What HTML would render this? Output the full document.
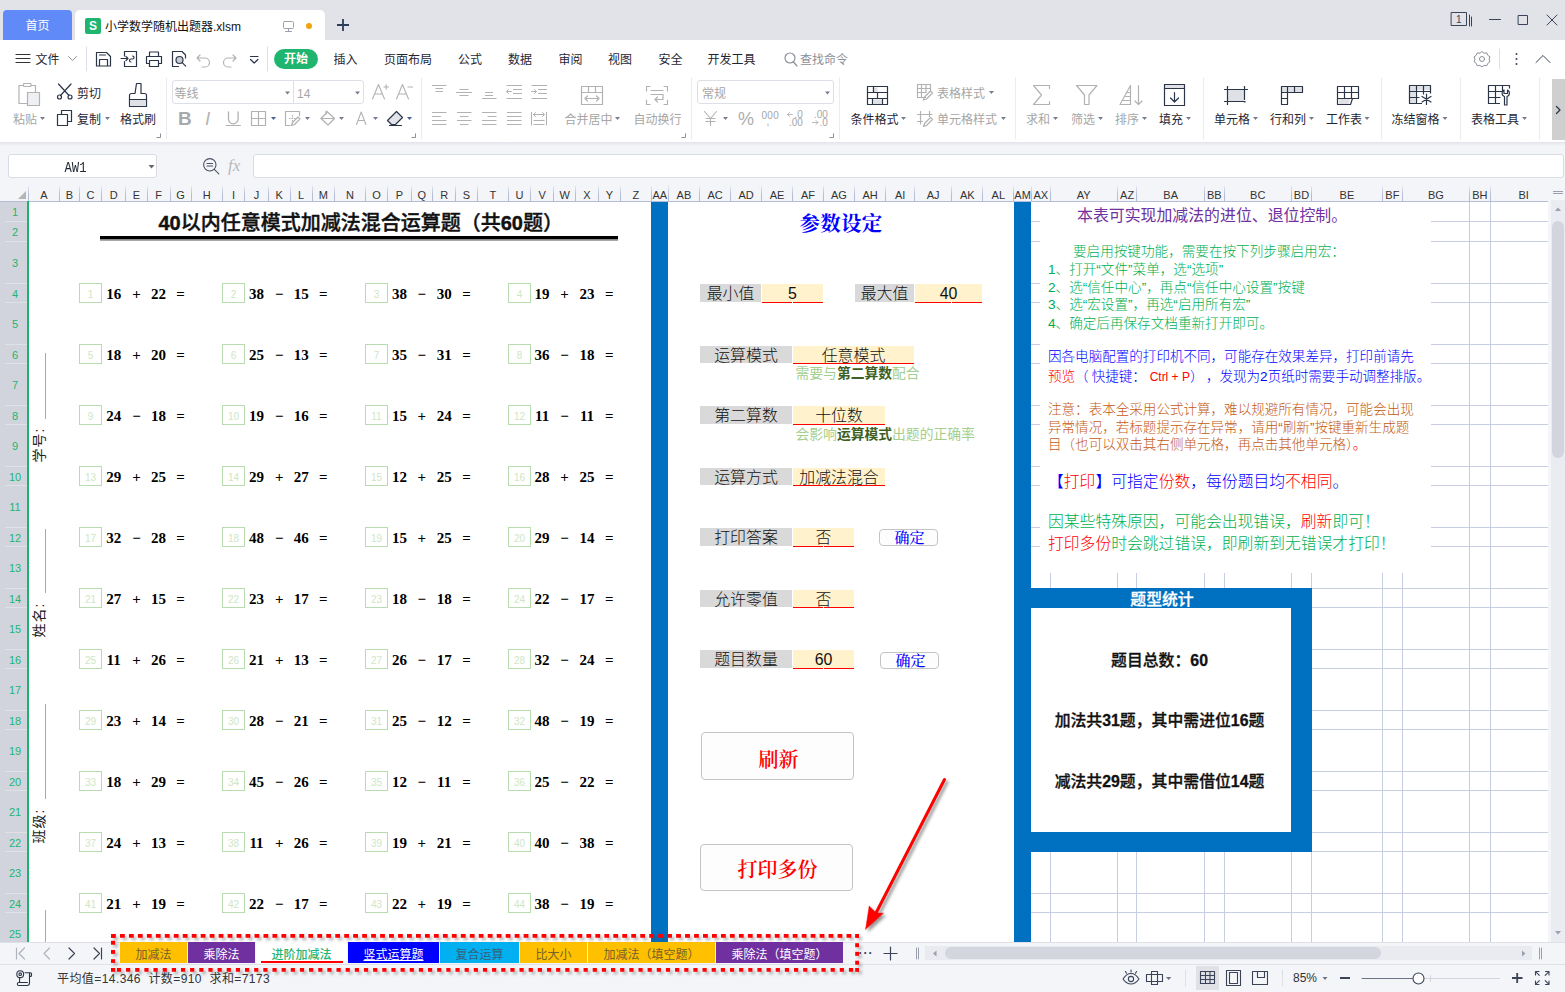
<!DOCTYPE html><html lang="zh"><head><meta charset="utf-8"><title>小学数学随机出题器.xlsm</title><style>
*{box-sizing:border-box}
html,body{margin:0;padding:0}
body{width:1565px;height:992px;position:relative;overflow:hidden;background:#fff;
font-family:"Liberation Sans","Noto Sans CJK SC",sans-serif;font-size:12px;color:#222}
.a{position:absolute}
.t{position:absolute;white-space:nowrap;line-height:1}
.c{position:absolute;white-space:nowrap;text-align:center;line-height:1}
.ui{font-family:"Liberation Sans","Noto Sans CJK SC",sans-serif}
.ser{font-family:"Liberation Serif","Noto Serif CJK SC",serif}
.dk{color:#1f2633}
.gy{color:#a6a6a6}
.num{font-family:"Liberation Serif","Noto Serif CJK SC",serif;font-weight:bold;font-size:15px;color:#000}
.bx{position:absolute;border:1px solid #b9dbb0;color:#cfe6c5;font-size:10px;text-align:center;font-family:"Liberation Sans",sans-serif}
.lab{position:absolute;background:#d9d9d9;color:#111;font-size:15.9px;text-align:center;white-space:nowrap;font-weight:300}
.val{position:absolute;background:#fff2cc;color:#111;font-size:15.9px;text-align:center;white-space:nowrap;border-bottom:1px solid #ff0000;font-weight:300}
.ch{position:absolute;top:187px;height:15px;font-size:11px;color:#333;text-align:center;line-height:17px;white-space:nowrap}
.rh{position:absolute;left:1.5px;width:27px;text-align:center;color:#22b573;font-size:11px;white-space:nowrap}
.tab{position:absolute;top:942px;height:21px;line-height:26px;text-align:center;font-size:12px;white-space:nowrap}
</style></head><body>
<div class="a" style="left:0;top:0;width:1565px;height:40px;background:#e1e3e8"></div>
<div class="a" style="left:0;top:40px;width:1565px;height:102px;background:#fff"></div>
<div class="a" style="left:0;top:142px;width:1565px;height:60px;background:#f4f5f8"></div>
<div class="a" style="left:0;top:142px;width:1565px;height:4px;background:linear-gradient(#e2e4ea,#f4f5f8)"></div>
<div class="a" style="left:3px;top:10px;width:69px;height:30px;background:#608af7;border-radius:4px 4px 0 0"></div>
<div class="c" style="left:3px;top:20px;width:69px;font-size:12px;color:#fff">首页</div>
<div class="a" style="left:75px;top:10px;width:250px;height:30px;background:#fff;border-radius:5px 5px 0 0"></div>
<div class="a" style="left:85px;top:18px;width:16px;height:16px;background:#1fb56f;border-radius:2px"></div>
<div class="c" style="left:85px;top:20px;width:16px;font-size:12px;color:#fff;font-weight:bold;font-family:'Liberation Sans',sans-serif">S</div>
<div class="t" style="left:105px;top:21px;font-size:12px;color:#111">小学数学随机出题器.xlsm</div>
<div class="a" style="left:306px;top:23px;width:6px;height:6px;border-radius:3px;background:#f0a30a"></div>
<div class="t" style="left:35.5px;top:54px;font-size:12px;color:#1f2633">文件</div>
<div class="a" style="left:274px;top:49px;width:44px;height:20px;border-radius:10px;background:#1fb56f"></div>
<div class="c" style="left:274px;top:53px;width:44px;font-size:12px;color:#fff;font-weight:bold">开始</div>
<div class="t" style="left:333.5px;top:54px;font-size:12px;color:#1f2633">插入</div>
<div class="t" style="left:384px;top:54px;font-size:12px;color:#1f2633">页面布局</div>
<div class="t" style="left:458px;top:54px;font-size:12px;color:#1f2633">公式</div>
<div class="t" style="left:508px;top:54px;font-size:12px;color:#1f2633">数据</div>
<div class="t" style="left:558.5px;top:54px;font-size:12px;color:#1f2633">审阅</div>
<div class="t" style="left:608px;top:54px;font-size:12px;color:#1f2633">视图</div>
<div class="t" style="left:658.5px;top:54px;font-size:12px;color:#1f2633">安全</div>
<div class="t" style="left:707.5px;top:54px;font-size:12px;color:#1f2633">开发工具</div>
<div class="t" style="left:800px;top:54px;font-size:12px;color:#8a8f99">查找命令</div>
<div class="t gy" style="left:13px;top:114px;font-size:12px">粘贴</div>
<div class="t dk" style="left:77px;top:88px;font-size:12px">剪切</div>
<div class="t dk" style="left:77px;top:114px;font-size:12px">复制</div>
<div class="t dk" style="left:120px;top:114px;font-size:12px">格式刷</div>
<div class="t gy" style="left:174.5px;top:88px;font-size:12px">等线</div>
<div class="t gy" style="left:297px;top:88px;font-size:12px">14</div>
<div class="t gy" style="left:564.5px;top:114px;font-size:12px">合并居中</div>
<div class="t gy" style="left:633.5px;top:114px;font-size:12px">自动换行</div>
<div class="t gy" style="left:702px;top:88px;font-size:12px">常规</div>
<div class="t dk" style="left:850.5px;top:114px;font-size:12px">条件格式</div>
<div class="t gy" style="left:937px;top:88px;font-size:12px">表格样式</div>
<div class="t gy" style="left:937px;top:114px;font-size:12px">单元格样式</div>
<div class="t gy" style="left:1026px;top:114px;font-size:12px">求和</div>
<div class="t gy" style="left:1071px;top:114px;font-size:12px">筛选</div>
<div class="t gy" style="left:1115px;top:114px;font-size:12px">排序</div>
<div class="t dk" style="left:1159px;top:114px;font-size:12px">填充</div>
<div class="t dk" style="left:1214px;top:114px;font-size:12px">单元格</div>
<div class="t dk" style="left:1270px;top:114px;font-size:12px">行和列</div>
<div class="t dk" style="left:1326px;top:114px;font-size:12px">工作表</div>
<div class="t dk" style="left:1391.5px;top:114px;font-size:12px">冻结窗格</div>
<div class="t dk" style="left:1471px;top:114px;font-size:12px">表格工具</div>
<div class="a" style="left:172px;top:80px;width:192px;height:24px;border:1px solid #dcdfe6;border-radius:3px"></div>
<div class="a" style="left:293px;top:80px;width:1px;height:24px;background:#dcdfe6"></div>
<div class="a" style="left:697px;top:80px;width:137px;height:24px;border:1px solid #dcdfe6;border-radius:3px"></div>
<div class="t" style="left:178px;top:109px;font-size:19px;color:#a9a9a9;font-weight:bold;font-family:'Liberation Sans',sans-serif">B</div>
<div class="t" style="left:205px;top:109px;font-size:19px;color:#b5b5b5;font-style:italic;font-family:'Liberation Sans',sans-serif">I</div>
<div class="t" style="left:738px;top:110px;font-size:18px;color:#adadad;font-family:'Liberation Sans',sans-serif">%</div>
<div class="a" style="left:1552px;top:79px;width:13px;height:61px;background:#cfcfcf"></div>
<div class="a" style="left:8px;top:154px;width:149px;height:24px;background:#fff;border:1px solid #d9dce3;border-radius:3px"></div>
<div class="c" style="left:8px;top:161.8px;width:135px;font-size:12.2px;color:#1f2633;font-family:'Liberation Mono',monospace;transform:scaleY(1.18)">AW1</div>
<div class="a" style="left:253px;top:154px;width:1311px;height:24px;background:#fff;border:1px solid #d9dce3;border-radius:3px"></div>
<div class="t ser" style="left:228px;top:157px;font-size:17px;color:#b8b8b8;font-style:italic">fx</div>
<svg class="a" style="left:0;top:0" width="1565" height="184" viewBox="0 0 1565 184" fill="none" stroke-width="1.2" stroke-linecap="round" stroke-linejoin="round">
<g stroke="#9aa0ad" stroke-width="1"><rect x="283.5" y="21.5" width="10" height="7" rx="1"/><path d="M288.5 28.5v3M285.5 31.5h6"/></g>
<g stroke="#2c3e5a" stroke-width="1.8" stroke-linecap="butt"><path d="M337 25h12M343 19v12"/></g>
<g stroke="#3a4358" stroke-width="1"><rect x="1451.5" y="12.5" width="15" height="13"/><path d="M1469.5 15v11M1471.5 17v9"/><path d="M1489.5 19.5h11M1518.5 15.5h9v9h-9zM1547 15l10 10M1557 15l-10 10" /></g>
<text x="1456" y="23" font-size="10" fill="#3a4358" stroke="none" font-family="Liberation Sans,sans-serif">1</text>
<g stroke="#333"><path d="M16 54.5h14M16 58.5h14M16 62.5h14"/></g>
<g stroke="#8a8f99" stroke-width="1"><path d="M68.5 56.5l4 4l4-4"/></g>
<g stroke="#dcdfe6" stroke-width="1"><path d="M86.5 47v24M267.5 47v24M1499.5 49v20"/></g>
<g stroke="#2b3548"><path d="M96.5 52.5h10l4 4v9.5h-14zM99.5 66v-6.5h8v6.5M99.5 55h6"/>
<path d="M124.5 56v-4.500h12v15h-12v-5M121 58.500h7M126 56.500l2 2l-2 2M131 62c-2 0-2-3 0-3h1.500c2 0 2-3 0-3"/>
<path d="M149.500 56v-4h9v4M149.500 63.500h-3v-7h15v7h-3M149.500 60.500h9v6h-9z"/>
<path d="M185.500 58v-3l-3.500-3.500h-9.500v15h6"/><circle cx="179.500" cy="60" r="3.500" fill="#c9ccd3"/><path d="M182.200 62.700l3.500 3.500"/>
<path d="M250.500 56.500h7.500M250.500 59.500l3.700 3.500l3.700-3.500"/></g>
<g stroke="#b3b3b3"><path d="M200 55l-3 3l3 3M197.500 58h7.500a4.500 4.500 0 0 1 0 9h-3"/><path d="M233 55l3 3l-3 3M235.500 58h-7.500a4.500 4.500 0 0 0 0 9h3"/></g>
<g stroke="#8a8f99"><circle cx="790" cy="58" r="5"/><path d="M793.500 62l3.500 4"/></g>
<g stroke="#8a8f99" stroke-width="1"><circle cx="1482" cy="59" r="2.500"/><path d="M1482 51.700l2.200 1.500l2.600-.3l1 2.400l2.100 1.500l-.8 2.500l.8 2.500l-2.100 1.500l-1 2.400l-2.600-.3l-2.200 1.500l-2.200-1.500l-2.600.3l-1-2.400l-2.100-1.500l.8-2.500l-.8-2.500l2.100-1.500l1-2.400l2.600.3z"/></g>
<g fill="#3a4358" stroke="none"><circle cx="1516.500" cy="54" r="1"/><circle cx="1516.500" cy="59" r="1"/><circle cx="1516.500" cy="64" r="1"/></g>
<g stroke="#3a4358" stroke-width="1"><path d="M1536 62.500l7-7l7 7"/></g>
<g stroke="#ebecf0" stroke-width="1"><path d="M166.5 78v61"/><path d="M421.5 78v61"/><path d="M691.5 78v61"/><path d="M839.5 78v61"/><path d="M1015.5 78v61"/><path d="M1203.5 78v61"/><path d="M1381.5 78v61"/><path d="M1460.5 78v61"/><path d="M1539.5 78v61"/></g>
<g stroke="#8a8f99" stroke-width="1" stroke-linecap="butt" stroke-linejoin="miter"><path d="M160.5 133.500v4h-4"/><path d="M415.5 133.500v4h-4"/><path d="M685.5 133.500v4h-4"/><path d="M833.5 133.500v4h-4"/></g>
<path d="M40 117h5l-2.500 3z" fill="#757d8e" stroke="none"/>
<path d="M105 117h5l-2.500 3z" fill="#757d8e" stroke="none"/>
<path d="M285 91.5h5l-2.500 3z" fill="#757d8e" stroke="none"/>
<path d="M355 91.5h5l-2.500 3z" fill="#757d8e" stroke="none"/>
<path d="M825 91.5h5l-2.500 3z" fill="#757d8e" stroke="none"/>
<path d="M305 117h5l-2.500 3z" fill="#757d8e" stroke="none"/>
<path d="M339 117h5l-2.500 3z" fill="#757d8e" stroke="none"/>
<path d="M373 117h5l-2.500 3z" fill="#757d8e" stroke="none"/>
<path d="M615 117h5l-2.500 3z" fill="#757d8e" stroke="none"/>
<path d="M723 117h5l-2.500 3z" fill="#757d8e" stroke="none"/>
<path d="M901 117h5l-2.500 3z" fill="#757d8e" stroke="none"/>
<path d="M989 91h5l-2.500 3z" fill="#757d8e" stroke="none"/>
<path d="M1001 117h5l-2.500 3z" fill="#757d8e" stroke="none"/>
<path d="M1053 117h5l-2.500 3z" fill="#757d8e" stroke="none"/>
<path d="M1098 117h5l-2.500 3z" fill="#757d8e" stroke="none"/>
<path d="M1142 117h5l-2.500 3z" fill="#757d8e" stroke="none"/>
<path d="M1186 117h5l-2.500 3z" fill="#757d8e" stroke="none"/>
<path d="M1253 117h5l-2.500 3z" fill="#757d8e" stroke="none"/>
<path d="M1309 117h5l-2.500 3z" fill="#757d8e" stroke="none"/>
<path d="M1364.5 117h5l-2.500 3z" fill="#757d8e" stroke="none"/>
<path d="M1442.5 117h5l-2.500 3z" fill="#757d8e" stroke="none"/>
<path d="M1522 117h5l-2.500 3z" fill="#757d8e" stroke="none"/>
<path d="M271 117h5l-2.500 3z" fill="#4a5f8f" stroke="none"/>
<path d="M407 117h5l-2.500 3z" fill="#4a5f8f" stroke="none"/>
<g stroke="#b2b2b2"><path d="M23.500 85.500h-4.500v18h8"/><path d="M31 85.500h4.500v6.500"/><rect x="23.500" y="83.500" width="7.500" height="3" rx="0.800"/><rect x="27.500" y="92.500" width="12" height="13" fill="#eef0f3"/></g>
<g stroke="#2b3548"><path d="M58.500 84l10.500 11.500M71 84l-10.500 11.500"/><circle cx="59.500" cy="97" r="2"/><circle cx="70" cy="97" r="2"/></g>
<g stroke="#2b3548"><path d="M61.500 114v-3.500h10v11h-3.500"/><rect x="57.500" y="114.500" width="10" height="11"/></g>
<g stroke="#2b3548"><path d="M136.500 83.500h4.500v10h3.500c1.500 0 2 .8 2 2v11h-17v-11c0-1.200.5-2 2-2h3.500z"/><rect x="130" y="100" width="16" height="6" fill="#dfe1e6" stroke="none"/><path d="M129.500 99.500h17"/></g>
<g stroke="#b2b2b2" stroke-width="1.100"><path d="M372.500 99l6-14.500l6 14.500M374.800 94h7.400M384 87h4.500M386.200 84.800v4.500"/><path d="M396.500 99l6-14.500l6 14.500M398.800 94h7.400M408 87h4.500"/></g>
<g stroke="#b2b2b2" stroke-width="1.300"><path d="M228.500 112v7a4.800 4.800 0 0 0 9.600 0v-7"/><path d="M226 125.500h14.500" stroke-width="1"/></g>
<g stroke="#b2b2b2" stroke-linecap="butt"><rect x="251.500" y="111.500" width="14" height="14"/><path d="M258.500 111.500v14M251.500 118.500h14"/></g>
<g stroke="#b2b2b2" stroke-linecap="butt"><path d="M299.500 116v-4.500h-14v14h5"/><path d="M289 118.500h7M292.500 115v7" stroke-dasharray="1.500 1"/><path d="M291.500 125.500l1-3l5.500-5.500l2 2l-5.500 5.500z"/></g>
<g stroke="#b2b2b2"><path d="M327 111.500l7.500 7l-6.500 6.500l-7-6.500l6.500-6.500"/><path d="M321 118.500h13"/><path d="M326 111v3"/></g>
<g stroke="#b2b2b2" stroke-width="1.100"><path d="M356.500 124.500l4.700-12.500l4.700 12.500M358.300 120.500h5.800"/></g>
<g stroke="#2b3548"><path d="M396.500 111.500l6 6l-7 7h-4l-4-4z" fill="#e2e4e9"/><path d="M389.500 125.500h12"/></g>
<g stroke="#b2b2b2" stroke-width="1" stroke-linecap="butt">
<path d="M432 85.5h14.5M435.5 88.5h7.5M435.5 91.5h7.5"/>
<path d="M459.5 89.5h9M456 92.5h16M459.5 95.5h9"/>
<path d="M485 92.5h8M485 95.5h8M482 98.5h14.5"/>
<path d="M506.5 85.5h15.5M513 89.5h9M513 93.5h9M506.5 98.5h15.5"/>
<path d="M506.500 91.500h5M508.500 89.500l-2 2l2 2" stroke-linecap="round"/>
<path d="M531.5 85.5h15.5M538 89.5h9M538 93.5h9M531.5 98.5h15.5"/>
<path d="M531.500 91.500h5M534.500 89.500l2 2l-2 2" stroke-linecap="round"/>
<path d="M432 112.5h14.5M432 116.5h9M432 120.5h14.5M432 124.5h14.5"/>
<path d="M457 112.5h14.5M460 116.5h8.5M457 120.5h14.5M460 124.5h8.5"/>
<path d="M482 112.5h14.5M487.5 116.5h9M482 120.5h14.5M482 124.5h14.5"/>
<path d="M507 112.5h14.5M507 116.5h14.5M507 120.5h14.5M507 124.5h14.5"/>
<path d="M531.500 112v13.500M546.500 112v13.500M533.500 120.500h11M533.500 124.500h11M533.500 114.500h11"/><path d="M535.500 112.500l-2 2l2 2M542.500 112.500l2 2l-2 2" stroke-linecap="round"/>
</g>
<g stroke="#b2b2b2" stroke-linecap="butt"><rect x="581.500" y="86.500" width="21" height="18"/><path d="M581.500 92.500h21M588.500 86.500v6M595.500 86.500v6"/><path d="M585 98.500h14M587.500 96l-2.500 2.500l2.500 2.500M596.500 96l2.500 2.500l-2.500 2.500" stroke-linecap="round"/></g>
<g stroke="#b2b2b2"><path d="M650 86.500h-3.500v4.500M664 86.500h3.500v4.500M650 104.500h-3.500v-4.500M664 104.500h3.500v-4.500"/><path d="M651 90.500h12M651 94.500h12M655 99.500h8v-5M657.500 97l-2.500 2.500l2.500 2.500"/></g>
<g stroke="#b2b2b2" stroke-width="1.100"><path d="M704.500 111.500l6 7l6-7M710.500 118.500v7M706 118.500h9M706 121.500h9"/></g>
<g fill="#a6a6a6" stroke="none" font-family="Liberation Sans,sans-serif" font-size="10">
<text x="761.500" y="118.500" letter-spacing="0.300">000</text><text x="766.500" y="125">,</text>
<text x="794.500" y="117.500">.0</text><text x="789" y="125.800">.00</text>
<text x="814" y="117.500">.00</text><text x="819.500" y="125.800">.0</text></g>
<g stroke="#b2b2b2" stroke-width="0.900"><path d="M787.500 114.500h5M789.500 112.500l-2 2l2 2M812.500 122.500h5.500M816 120.500l2 2l-2 2"/></g>
<g stroke="#2b3548" stroke-linecap="butt"><rect x="872.500" y="87.500" width="5" height="5" fill="#dfe1e6" stroke="none"/><rect x="873.500" y="99.500" width="8" height="5" fill="#dfe1e6" stroke="none"/><rect x="867.500" y="86.500" width="20" height="18"/><path d="M867.500 92.500h20M867.500 98.500h20M873.500 86.500v6M877.500 92.500v6M872.500 98.500v6M882.500 98.500v6"/></g>
<g stroke="#b2b2b2" stroke-linecap="butt"><path d="M926 97.500h-8.500v-13h13v7"/><path d="M917.500 88.500h13M917.500 92.500h9M921.500 84.500v13M926 84.500v8"/><path d="M923.500 100l1-3l6-6l2 2l-6 6z" stroke-linecap="round"/></g>
<g stroke="#b2b2b2" stroke-linecap="butt"><path d="M917 114.500h15.500M920.500 111v13.500M929.500 111v6M917 121.500h6"/><path d="M923.500 126.500l1-3l6-6l2 2l-6 6z" stroke-linecap="round"/></g>
<g stroke="#b2b2b2"><path d="M1049.500 88.500v-3h-16l8 9.500l-8 9.500h16v-3"/>
<path d="M1076.500 85.500h20.500l-8 9.500v9.500h-4.500v-9.500z"/>
<path d="M1120 104.500l10.500-19v19zM1124.500 96.500h6M1122 100.500h8.500M1127 92.500h3.500"/><path d="M1138.500 85.500v19M1135 101l3.500 3.500l3.500-3.500"/></g>
<g stroke="#2b3548"><rect x="1165" y="85" width="19" height="3.500" fill="#dfe1e6" stroke="none"/><rect x="1164.500" y="84.500" width="20" height="21"/><path d="M1164.500 88.500h20M1174.500 92.500v9M1170.500 98l4 4l4-4"/></g>
<g stroke="#2b3548" stroke-linecap="butt"><rect x="1228" y="90" width="16" height="11" fill="#dfe1e6" stroke="none"/><path d="M1224 89.500h24M1224 101.500h20M1227.500 86v19M1244.500 86v14"/><rect x="1244" y="101" width="1.500" height="1.500" fill="#2b3548" stroke="none"/></g>
<g stroke="#2b3548" stroke-linecap="butt"><rect x="1282" y="87" width="20" height="5" fill="#dfe1e6" stroke="none"/><path d="M1281.500 86.500h21v6h-15v12h-6zM1287.500 86.500v6M1294.500 86.500v6M1281.500 92.500h6M1281.500 98.500h6"/></g>
<g stroke="#2b3548" stroke-linecap="butt"><path d="M1339 99h11l-1.500 5h-9.500z" fill="#dfe1e6" stroke="none"/><path d="M1337.500 86.500h21v12h-6l-2 6h-13zM1337.500 92.500h21M1337.500 98.500h15M1344.500 86.500v12M1351.500 86.500v12"/></g>
<g stroke="#2b3548" stroke-linecap="butt"><rect x="1409.500" y="86" width="21" height="4" fill="#dfe1e6" stroke="none"/><rect x="1409.500" y="86" width="6" height="17" fill="#dfe1e6" stroke="none"/><path d="M1422 103.500h-12.500v-18h21v8M1409.500 91.500h21M1409.500 97.500h10M1416.500 85.500v18M1423.500 85.500v9"/><path d="M1426.500 94v10.500M1422 96.500l9 5.500M1431 96.500l-9 5.500" stroke-linecap="round"/></g>
<g stroke="#2b3548" stroke-linecap="butt"><path d="M1500 103.500h-11.500v-18h21v3M1488.500 91.500h14M1488.500 97.500h12M1495.500 85.500v18M1502.500 85.500v6"/><path d="M1504.500 105v-8.500a3.500 3.500 0 0 1-.5-6.500v3.500h3.500v-3.500a3.500 3.500 0 0 1-.5 6.500v8.500z" stroke-linejoin="round"/></g>
<path d="M1556.500 106.500l3.500 3.500l-3.500 3.500" stroke="#2b3548" stroke-width="1.300"/>
<g stroke="#4a5162" stroke-width="1.100"><circle cx="209.800" cy="164.800" r="6.200"/><path d="M207 163.500h5.600M207 166h5.600M214.300 169.300l4.500 4.500"/></g>
<path d="M148.500 165l3 3.500l3-3.500z" fill="#666" stroke="none"/>
</svg>
<div class="a" style="left:0;top:184px;width:1565px;height:758px;overflow:hidden">
<div class="a" style="left:0;top:-184px;width:1565px;height:992px">
<div class="a" style="left:28px;top:202px;width:1520px;height:740px;background:#fff"></div>
<div class="a" style="left:0;top:184px;width:1548px;height:18px;background:#f4f5f8;border-bottom:1px solid #b4bcd6"></div>
<div class="ch" style="left:28.5px;width:31.0px">A</div>
<div class="ch" style="left:59.5px;width:20.0px">B</div>
<div class="ch" style="left:79.5px;width:22.0px">C</div>
<div class="ch" style="left:101.5px;width:24.3px">D</div>
<div class="ch" style="left:125.8px;width:21.4px">E</div>
<div class="ch" style="left:147.2px;width:22.8px">F</div>
<div class="ch" style="left:170.0px;width:21.2px">G</div>
<div class="ch" style="left:191.2px;width:31.2px">H</div>
<div class="ch" style="left:222.4px;width:22.2px">I</div>
<div class="ch" style="left:244.6px;width:23.8px">J</div>
<div class="ch" style="left:268.4px;width:21.6px">K</div>
<div class="ch" style="left:290.0px;width:22.3px">L</div>
<div class="ch" style="left:312.3px;width:22.0px">M</div>
<div class="ch" style="left:334.3px;width:31.2px">N</div>
<div class="ch" style="left:365.5px;width:22.2px">O</div>
<div class="ch" style="left:387.7px;width:23.5px">P</div>
<div class="ch" style="left:411.2px;width:21.2px">Q</div>
<div class="ch" style="left:432.4px;width:23.5px">R</div>
<div class="ch" style="left:455.9px;width:21.2px">S</div>
<div class="ch" style="left:477.1px;width:31.5px">T</div>
<div class="ch" style="left:508.6px;width:21.7px">U</div>
<div class="ch" style="left:530.3px;width:23.5px">V</div>
<div class="ch" style="left:553.8px;width:21.7px">W</div>
<div class="ch" style="left:575.5px;width:23.0px">X</div>
<div class="ch" style="left:598.5px;width:21.8px">Y</div>
<div class="ch" style="left:620.3px;width:31.1px">Z</div>
<div class="ch" style="left:651.4px;width:16.9px">AA</div>
<div class="ch" style="left:668.3px;width:31.2px">AB</div>
<div class="ch" style="left:699.5px;width:31.2px">AC</div>
<div class="ch" style="left:730.7px;width:30.8px">AD</div>
<div class="ch" style="left:761.5px;width:31.0px">AE</div>
<div class="ch" style="left:792.5px;width:30.9px">AF</div>
<div class="ch" style="left:823.4px;width:31.2px">AG</div>
<div class="ch" style="left:854.6px;width:31.1px">AH</div>
<div class="ch" style="left:885.7px;width:28.9px">AI</div>
<div class="ch" style="left:914.6px;width:37.1px">AJ</div>
<div class="ch" style="left:951.7px;width:31.2px">AK</div>
<div class="ch" style="left:982.9px;width:30.9px">AL</div>
<div class="ch" style="left:1013.8px;width:17.6px">AM</div>
<div class="ch" style="left:1031.4px;width:18.7px">AX</div>
<div class="ch" style="left:1050.1px;width:67.2px">AY</div>
<div class="ch" style="left:1117.3px;width:19.7px">AZ</div>
<div class="ch" style="left:1137.0px;width:67.4px">BA</div>
<div class="ch" style="left:1204.4px;width:19.8px">BB</div>
<div class="ch" style="left:1224.2px;width:67.1px">BC</div>
<div class="ch" style="left:1291.3px;width:20.3px">BD</div>
<div class="ch" style="left:1311.6px;width:70.7px">BE</div>
<div class="ch" style="left:1382.3px;width:20.1px">BF</div>
<div class="ch" style="left:1402.4px;width:67.0px">BG</div>
<div class="ch" style="left:1469.4px;width:21.0px">BH</div>
<div class="ch" style="left:1490.4px;width:66.5px">BI</div>
<div class="a" style="left:28px;top:186px;width:1px;height:15px;background:linear-gradient(#e4e7ef,#b4bcd6 60%)"></div>
<div class="a" style="left:59px;top:186px;width:1px;height:15px;background:linear-gradient(#e4e7ef,#b4bcd6 60%)"></div>
<div class="a" style="left:79px;top:186px;width:1px;height:15px;background:linear-gradient(#e4e7ef,#b4bcd6 60%)"></div>
<div class="a" style="left:101px;top:186px;width:1px;height:15px;background:linear-gradient(#e4e7ef,#b4bcd6 60%)"></div>
<div class="a" style="left:125px;top:186px;width:1px;height:15px;background:linear-gradient(#e4e7ef,#b4bcd6 60%)"></div>
<div class="a" style="left:147px;top:186px;width:1px;height:15px;background:linear-gradient(#e4e7ef,#b4bcd6 60%)"></div>
<div class="a" style="left:170px;top:186px;width:1px;height:15px;background:linear-gradient(#e4e7ef,#b4bcd6 60%)"></div>
<div class="a" style="left:191px;top:186px;width:1px;height:15px;background:linear-gradient(#e4e7ef,#b4bcd6 60%)"></div>
<div class="a" style="left:222px;top:186px;width:1px;height:15px;background:linear-gradient(#e4e7ef,#b4bcd6 60%)"></div>
<div class="a" style="left:244px;top:186px;width:1px;height:15px;background:linear-gradient(#e4e7ef,#b4bcd6 60%)"></div>
<div class="a" style="left:268px;top:186px;width:1px;height:15px;background:linear-gradient(#e4e7ef,#b4bcd6 60%)"></div>
<div class="a" style="left:290px;top:186px;width:1px;height:15px;background:linear-gradient(#e4e7ef,#b4bcd6 60%)"></div>
<div class="a" style="left:312px;top:186px;width:1px;height:15px;background:linear-gradient(#e4e7ef,#b4bcd6 60%)"></div>
<div class="a" style="left:334px;top:186px;width:1px;height:15px;background:linear-gradient(#e4e7ef,#b4bcd6 60%)"></div>
<div class="a" style="left:365px;top:186px;width:1px;height:15px;background:linear-gradient(#e4e7ef,#b4bcd6 60%)"></div>
<div class="a" style="left:387px;top:186px;width:1px;height:15px;background:linear-gradient(#e4e7ef,#b4bcd6 60%)"></div>
<div class="a" style="left:411px;top:186px;width:1px;height:15px;background:linear-gradient(#e4e7ef,#b4bcd6 60%)"></div>
<div class="a" style="left:432px;top:186px;width:1px;height:15px;background:linear-gradient(#e4e7ef,#b4bcd6 60%)"></div>
<div class="a" style="left:455px;top:186px;width:1px;height:15px;background:linear-gradient(#e4e7ef,#b4bcd6 60%)"></div>
<div class="a" style="left:477px;top:186px;width:1px;height:15px;background:linear-gradient(#e4e7ef,#b4bcd6 60%)"></div>
<div class="a" style="left:508px;top:186px;width:1px;height:15px;background:linear-gradient(#e4e7ef,#b4bcd6 60%)"></div>
<div class="a" style="left:530px;top:186px;width:1px;height:15px;background:linear-gradient(#e4e7ef,#b4bcd6 60%)"></div>
<div class="a" style="left:553px;top:186px;width:1px;height:15px;background:linear-gradient(#e4e7ef,#b4bcd6 60%)"></div>
<div class="a" style="left:575px;top:186px;width:1px;height:15px;background:linear-gradient(#e4e7ef,#b4bcd6 60%)"></div>
<div class="a" style="left:598px;top:186px;width:1px;height:15px;background:linear-gradient(#e4e7ef,#b4bcd6 60%)"></div>
<div class="a" style="left:620px;top:186px;width:1px;height:15px;background:linear-gradient(#e4e7ef,#b4bcd6 60%)"></div>
<div class="a" style="left:651px;top:186px;width:1px;height:15px;background:linear-gradient(#e4e7ef,#b4bcd6 60%)"></div>
<div class="a" style="left:668px;top:186px;width:1px;height:15px;background:linear-gradient(#e4e7ef,#b4bcd6 60%)"></div>
<div class="a" style="left:699px;top:186px;width:1px;height:15px;background:linear-gradient(#e4e7ef,#b4bcd6 60%)"></div>
<div class="a" style="left:730px;top:186px;width:1px;height:15px;background:linear-gradient(#e4e7ef,#b4bcd6 60%)"></div>
<div class="a" style="left:761px;top:186px;width:1px;height:15px;background:linear-gradient(#e4e7ef,#b4bcd6 60%)"></div>
<div class="a" style="left:792px;top:186px;width:1px;height:15px;background:linear-gradient(#e4e7ef,#b4bcd6 60%)"></div>
<div class="a" style="left:823px;top:186px;width:1px;height:15px;background:linear-gradient(#e4e7ef,#b4bcd6 60%)"></div>
<div class="a" style="left:854px;top:186px;width:1px;height:15px;background:linear-gradient(#e4e7ef,#b4bcd6 60%)"></div>
<div class="a" style="left:885px;top:186px;width:1px;height:15px;background:linear-gradient(#e4e7ef,#b4bcd6 60%)"></div>
<div class="a" style="left:914px;top:186px;width:1px;height:15px;background:linear-gradient(#e4e7ef,#b4bcd6 60%)"></div>
<div class="a" style="left:951px;top:186px;width:1px;height:15px;background:linear-gradient(#e4e7ef,#b4bcd6 60%)"></div>
<div class="a" style="left:982px;top:186px;width:1px;height:15px;background:linear-gradient(#e4e7ef,#b4bcd6 60%)"></div>
<div class="a" style="left:1013px;top:186px;width:1px;height:15px;background:linear-gradient(#e4e7ef,#b4bcd6 60%)"></div>
<div class="a" style="left:1031px;top:186px;width:1px;height:15px;background:linear-gradient(#e4e7ef,#b4bcd6 60%)"></div>
<div class="a" style="left:1050px;top:186px;width:1px;height:15px;background:linear-gradient(#e4e7ef,#b4bcd6 60%)"></div>
<div class="a" style="left:1117px;top:186px;width:1px;height:15px;background:linear-gradient(#e4e7ef,#b4bcd6 60%)"></div>
<div class="a" style="left:1136px;top:186px;width:1px;height:15px;background:linear-gradient(#e4e7ef,#b4bcd6 60%)"></div>
<div class="a" style="left:1204px;top:186px;width:1px;height:15px;background:linear-gradient(#e4e7ef,#b4bcd6 60%)"></div>
<div class="a" style="left:1224px;top:186px;width:1px;height:15px;background:linear-gradient(#e4e7ef,#b4bcd6 60%)"></div>
<div class="a" style="left:1291px;top:186px;width:1px;height:15px;background:linear-gradient(#e4e7ef,#b4bcd6 60%)"></div>
<div class="a" style="left:1311px;top:186px;width:1px;height:15px;background:linear-gradient(#e4e7ef,#b4bcd6 60%)"></div>
<div class="a" style="left:1382px;top:186px;width:1px;height:15px;background:linear-gradient(#e4e7ef,#b4bcd6 60%)"></div>
<div class="a" style="left:1402px;top:186px;width:1px;height:15px;background:linear-gradient(#e4e7ef,#b4bcd6 60%)"></div>
<div class="a" style="left:1469px;top:186px;width:1px;height:15px;background:linear-gradient(#e4e7ef,#b4bcd6 60%)"></div>
<div class="a" style="left:1490px;top:186px;width:1px;height:15px;background:linear-gradient(#e4e7ef,#b4bcd6 60%)"></div>
<div class="a" style="left:1548px;top:186px;width:1px;height:15px;background:linear-gradient(#e4e7ef,#b4bcd6 60%)"></div>
<div class="a" style="left:18px;top:191px;width:0;height:0;border-left:8px solid transparent;border-bottom:8px solid #b5b5b5"></div>
<div class="a" style="left:1031px;top:221px;width:517px;height:1px;background:#c8cee2"></div>
<div class="a" style="left:1031px;top:241px;width:517px;height:1px;background:#c8cee2"></div>
<div class="a" style="left:1031px;top:283px;width:517px;height:1px;background:#c8cee2"></div>
<div class="a" style="left:1031px;top:302px;width:517px;height:1px;background:#c8cee2"></div>
<div class="a" style="left:1031px;top:344px;width:517px;height:1px;background:#c8cee2"></div>
<div class="a" style="left:1031px;top:363px;width:517px;height:1px;background:#c8cee2"></div>
<div class="a" style="left:1031px;top:405px;width:517px;height:1px;background:#c8cee2"></div>
<div class="a" style="left:1031px;top:424px;width:517px;height:1px;background:#c8cee2"></div>
<div class="a" style="left:1031px;top:466px;width:517px;height:1px;background:#c8cee2"></div>
<div class="a" style="left:1031px;top:485px;width:517px;height:1px;background:#c8cee2"></div>
<div class="a" style="left:1031px;top:527px;width:517px;height:1px;background:#c8cee2"></div>
<div class="a" style="left:1031px;top:546px;width:517px;height:1px;background:#c8cee2"></div>
<div class="a" style="left:1031px;top:588px;width:517px;height:1px;background:#c8cee2"></div>
<div class="a" style="left:1031px;top:607px;width:517px;height:1px;background:#c8cee2"></div>
<div class="a" style="left:1031px;top:649px;width:517px;height:1px;background:#c8cee2"></div>
<div class="a" style="left:1031px;top:668px;width:517px;height:1px;background:#c8cee2"></div>
<div class="a" style="left:1031px;top:710px;width:517px;height:1px;background:#c8cee2"></div>
<div class="a" style="left:1031px;top:729px;width:517px;height:1px;background:#c8cee2"></div>
<div class="a" style="left:1031px;top:771px;width:517px;height:1px;background:#c8cee2"></div>
<div class="a" style="left:1031px;top:790px;width:517px;height:1px;background:#c8cee2"></div>
<div class="a" style="left:1031px;top:832px;width:517px;height:1px;background:#c8cee2"></div>
<div class="a" style="left:1031px;top:851px;width:517px;height:1px;background:#c8cee2"></div>
<div class="a" style="left:1031px;top:893px;width:517px;height:1px;background:#c8cee2"></div>
<div class="a" style="left:1031px;top:912px;width:517px;height:1px;background:#c8cee2"></div>
<div class="a" style="left:1031px;top:954px;width:517px;height:1px;background:#c8cee2"></div>
<div class="a" style="left:1050px;top:202px;width:1px;height:740px;background:#c8cee2"></div>
<div class="a" style="left:1117px;top:202px;width:1px;height:740px;background:#c8cee2"></div>
<div class="a" style="left:1136px;top:202px;width:1px;height:740px;background:#c8cee2"></div>
<div class="a" style="left:1204px;top:202px;width:1px;height:740px;background:#c8cee2"></div>
<div class="a" style="left:1224px;top:202px;width:1px;height:740px;background:#c8cee2"></div>
<div class="a" style="left:1291px;top:202px;width:1px;height:740px;background:#c8cee2"></div>
<div class="a" style="left:1311px;top:202px;width:1px;height:740px;background:#c8cee2"></div>
<div class="a" style="left:1382px;top:202px;width:1px;height:740px;background:#c8cee2"></div>
<div class="a" style="left:1402px;top:202px;width:1px;height:740px;background:#c8cee2"></div>
<div class="a" style="left:1469px;top:202px;width:1px;height:740px;background:#c8cee2"></div>
<div class="a" style="left:1490px;top:202px;width:1px;height:740px;background:#c8cee2"></div>
<div class="a" style="left:1548px;top:202px;width:1px;height:740px;background:#c8cee2"></div>
<div class="a" style="left:1040px;top:202px;width:391px;height:371px;background:#fff"></div>
<div class="a" style="left:651px;top:202px;width:17px;height:740px;background:#0070c0"></div>
<div class="a" style="left:1014px;top:202px;width:17px;height:740px;background:#0070c0"></div>
<div class="a" style="left:1031px;top:588px;width:281px;height:264px;background:#0070c0"></div>
<div class="a" style="left:1031px;top:608px;width:260px;height:224px;background:#fff"></div>
<div class="c" style="left:1031px;top:591.6px;width:262px;font-size:15.87px;font-weight:500;-webkit-text-stroke:0.3px #fff;color:#fff">题型统计</div>
<div class="c" style="left:1030px;top:652.8px;width:259px;font-size:15.87px;font-weight:500;-webkit-text-stroke:0.3px #111;color:#111">题目总数：<b>60</b></div>
<div class="c" style="left:1030px;top:713px;width:259px;font-size:15.87px;font-weight:500;-webkit-text-stroke:0.3px #111;color:#111">加法共<b>31</b>题，其中需进位<b>16</b>题</div>
<div class="c" style="left:1030px;top:774px;width:259px;font-size:15.87px;font-weight:500;-webkit-text-stroke:0.3px #111;color:#111">减法共<b>29</b>题，其中需借位<b>14</b>题</div>
<div class="a" style="left:0;top:202px;width:27px;height:740px;background:#d1d4dc"></div>
<div class="a" style="left:27px;top:201px;width:2px;height:741px;background:#1cb36c"></div>
<div class="rh" style="top:201.5px;line-height:21.0px;height:20.0px">1</div>
<div class="a" style="left:5px;top:221px;width:22px;height:1px;background:#dfe1e7"></div>
<div class="rh" style="top:221.5px;line-height:21.0px;height:20.0px">2</div>
<div class="a" style="left:5px;top:241px;width:22px;height:1px;background:#dfe1e7"></div>
<div class="rh" style="top:241.5px;line-height:43.0px;height:42.0px">3</div>
<div class="a" style="left:5px;top:283px;width:22px;height:1px;background:#dfe1e7"></div>
<div class="rh" style="top:283.5px;line-height:20.0px;height:19.0px">4</div>
<div class="a" style="left:5px;top:302px;width:22px;height:1px;background:#dfe1e7"></div>
<div class="rh" style="top:302.5px;line-height:43.0px;height:42.0px">5</div>
<div class="a" style="left:5px;top:344px;width:22px;height:1px;background:#dfe1e7"></div>
<div class="rh" style="top:344.5px;line-height:20.0px;height:19.0px">6</div>
<div class="a" style="left:5px;top:363px;width:22px;height:1px;background:#dfe1e7"></div>
<div class="rh" style="top:363.5px;line-height:43.0px;height:42.0px">7</div>
<div class="a" style="left:5px;top:405px;width:22px;height:1px;background:#dfe1e7"></div>
<div class="rh" style="top:405.5px;line-height:20.0px;height:19.0px">8</div>
<div class="a" style="left:5px;top:424px;width:22px;height:1px;background:#dfe1e7"></div>
<div class="rh" style="top:424.5px;line-height:43.0px;height:42.0px">9</div>
<div class="a" style="left:5px;top:466px;width:22px;height:1px;background:#dfe1e7"></div>
<div class="rh" style="top:466.5px;line-height:20.0px;height:19.0px">10</div>
<div class="a" style="left:5px;top:485px;width:22px;height:1px;background:#dfe1e7"></div>
<div class="rh" style="top:485.5px;line-height:43.0px;height:42.0px">11</div>
<div class="a" style="left:5px;top:527px;width:22px;height:1px;background:#dfe1e7"></div>
<div class="rh" style="top:527.5px;line-height:20.0px;height:19.0px">12</div>
<div class="a" style="left:5px;top:546px;width:22px;height:1px;background:#dfe1e7"></div>
<div class="rh" style="top:546.5px;line-height:43.0px;height:42.0px">13</div>
<div class="a" style="left:5px;top:588px;width:22px;height:1px;background:#dfe1e7"></div>
<div class="rh" style="top:588.5px;line-height:20.0px;height:19.0px">14</div>
<div class="a" style="left:5px;top:607px;width:22px;height:1px;background:#dfe1e7"></div>
<div class="rh" style="top:607.5px;line-height:43.0px;height:42.0px">15</div>
<div class="a" style="left:5px;top:649px;width:22px;height:1px;background:#dfe1e7"></div>
<div class="rh" style="top:649.5px;line-height:20.0px;height:19.0px">16</div>
<div class="a" style="left:5px;top:668px;width:22px;height:1px;background:#dfe1e7"></div>
<div class="rh" style="top:668.5px;line-height:43.0px;height:42.0px">17</div>
<div class="a" style="left:5px;top:710px;width:22px;height:1px;background:#dfe1e7"></div>
<div class="rh" style="top:710.5px;line-height:20.0px;height:19.0px">18</div>
<div class="a" style="left:5px;top:729px;width:22px;height:1px;background:#dfe1e7"></div>
<div class="rh" style="top:729.5px;line-height:43.0px;height:42.0px">19</div>
<div class="a" style="left:5px;top:771px;width:22px;height:1px;background:#dfe1e7"></div>
<div class="rh" style="top:771.5px;line-height:20.0px;height:19.0px">20</div>
<div class="a" style="left:5px;top:790px;width:22px;height:1px;background:#dfe1e7"></div>
<div class="rh" style="top:790.5px;line-height:43.0px;height:42.0px">21</div>
<div class="a" style="left:5px;top:832px;width:22px;height:1px;background:#dfe1e7"></div>
<div class="rh" style="top:832.5px;line-height:20.0px;height:19.0px">22</div>
<div class="a" style="left:5px;top:851px;width:22px;height:1px;background:#dfe1e7"></div>
<div class="rh" style="top:851.5px;line-height:43.0px;height:42.0px">23</div>
<div class="a" style="left:5px;top:893px;width:22px;height:1px;background:#dfe1e7"></div>
<div class="rh" style="top:893.5px;line-height:20.0px;height:19.0px">24</div>
<div class="a" style="left:5px;top:912px;width:22px;height:1px;background:#dfe1e7"></div>
<div class="rh" style="top:912.5px;line-height:43.0px;height:42.0px">25</div>
<div class="a" style="left:5px;top:954px;width:22px;height:1px;background:#dfe1e7"></div>
<div class="t" style="left:158.5px;top:213px;font-size:20px;font-weight:500;-webkit-text-stroke:0.4px #111;color:#111;letter-spacing:0px" id="ttl"><b>40</b>以内任意模式加减法混合运算题（共<b>60</b>题）</div>
<div class="a" style="left:100px;top:236px;width:518px;height:3px;background:#000"></div>
<div class="a" style="left:100px;top:239px;width:518px;height:2px;background:linear-gradient(#777,#bbb)"></div>
<div class="bx" style="left:79px;top:283px;width:23px;height:20px;line-height:22px">1</div>
<div class="c num" style="left:101.5px;top:287.1px;width:24.3px">16</div>
<div class="c num" style="left:125.8px;top:287.1px;width:21.4px">+</div>
<div class="c num" style="left:147.2px;top:287.1px;width:22.8px">22</div>
<div class="c num" style="left:170.0px;top:287.1px;width:21.2px">=</div>
<div class="bx" style="left:222px;top:283px;width:23px;height:20px;line-height:22px">2</div>
<div class="c num" style="left:244.6px;top:287.1px;width:23.8px">38</div>
<div class="c num" style="left:268.4px;top:287.1px;width:21.6px">−</div>
<div class="c num" style="left:290.0px;top:287.1px;width:22.3px">15</div>
<div class="c num" style="left:312.3px;top:287.1px;width:22.0px">=</div>
<div class="bx" style="left:365px;top:283px;width:23px;height:20px;line-height:22px">3</div>
<div class="c num" style="left:387.7px;top:287.1px;width:23.5px">38</div>
<div class="c num" style="left:411.2px;top:287.1px;width:21.2px">−</div>
<div class="c num" style="left:432.4px;top:287.1px;width:23.5px">30</div>
<div class="c num" style="left:455.9px;top:287.1px;width:21.2px">=</div>
<div class="bx" style="left:508px;top:283px;width:23px;height:20px;line-height:22px">4</div>
<div class="c num" style="left:530.3px;top:287.1px;width:23.5px">19</div>
<div class="c num" style="left:553.8px;top:287.1px;width:21.7px">+</div>
<div class="c num" style="left:575.5px;top:287.1px;width:23.0px">23</div>
<div class="c num" style="left:598.5px;top:287.1px;width:21.8px">=</div>
<div class="bx" style="left:79px;top:344px;width:23px;height:20px;line-height:22px">5</div>
<div class="c num" style="left:101.5px;top:348.1px;width:24.3px">18</div>
<div class="c num" style="left:125.8px;top:348.1px;width:21.4px">+</div>
<div class="c num" style="left:147.2px;top:348.1px;width:22.8px">20</div>
<div class="c num" style="left:170.0px;top:348.1px;width:21.2px">=</div>
<div class="bx" style="left:222px;top:344px;width:23px;height:20px;line-height:22px">6</div>
<div class="c num" style="left:244.6px;top:348.1px;width:23.8px">25</div>
<div class="c num" style="left:268.4px;top:348.1px;width:21.6px">−</div>
<div class="c num" style="left:290.0px;top:348.1px;width:22.3px">13</div>
<div class="c num" style="left:312.3px;top:348.1px;width:22.0px">=</div>
<div class="bx" style="left:365px;top:344px;width:23px;height:20px;line-height:22px">7</div>
<div class="c num" style="left:387.7px;top:348.1px;width:23.5px">35</div>
<div class="c num" style="left:411.2px;top:348.1px;width:21.2px">−</div>
<div class="c num" style="left:432.4px;top:348.1px;width:23.5px">31</div>
<div class="c num" style="left:455.9px;top:348.1px;width:21.2px">=</div>
<div class="bx" style="left:508px;top:344px;width:23px;height:20px;line-height:22px">8</div>
<div class="c num" style="left:530.3px;top:348.1px;width:23.5px">36</div>
<div class="c num" style="left:553.8px;top:348.1px;width:21.7px">−</div>
<div class="c num" style="left:575.5px;top:348.1px;width:23.0px">18</div>
<div class="c num" style="left:598.5px;top:348.1px;width:21.8px">=</div>
<div class="bx" style="left:79px;top:405px;width:23px;height:20px;line-height:22px">9</div>
<div class="c num" style="left:101.5px;top:409.1px;width:24.3px">24</div>
<div class="c num" style="left:125.8px;top:409.1px;width:21.4px">−</div>
<div class="c num" style="left:147.2px;top:409.1px;width:22.8px">18</div>
<div class="c num" style="left:170.0px;top:409.1px;width:21.2px">=</div>
<div class="bx" style="left:222px;top:405px;width:23px;height:20px;line-height:22px">10</div>
<div class="c num" style="left:244.6px;top:409.1px;width:23.8px">19</div>
<div class="c num" style="left:268.4px;top:409.1px;width:21.6px">−</div>
<div class="c num" style="left:290.0px;top:409.1px;width:22.3px">16</div>
<div class="c num" style="left:312.3px;top:409.1px;width:22.0px">=</div>
<div class="bx" style="left:365px;top:405px;width:23px;height:20px;line-height:22px">11</div>
<div class="c num" style="left:387.7px;top:409.1px;width:23.5px">15</div>
<div class="c num" style="left:411.2px;top:409.1px;width:21.2px">+</div>
<div class="c num" style="left:432.4px;top:409.1px;width:23.5px">24</div>
<div class="c num" style="left:455.9px;top:409.1px;width:21.2px">=</div>
<div class="bx" style="left:508px;top:405px;width:23px;height:20px;line-height:22px">12</div>
<div class="c num" style="left:530.3px;top:409.1px;width:23.5px">11</div>
<div class="c num" style="left:553.8px;top:409.1px;width:21.7px">−</div>
<div class="c num" style="left:575.5px;top:409.1px;width:23.0px">11</div>
<div class="c num" style="left:598.5px;top:409.1px;width:21.8px">=</div>
<div class="bx" style="left:79px;top:466px;width:23px;height:20px;line-height:22px">13</div>
<div class="c num" style="left:101.5px;top:470.1px;width:24.3px">29</div>
<div class="c num" style="left:125.8px;top:470.1px;width:21.4px">+</div>
<div class="c num" style="left:147.2px;top:470.1px;width:22.8px">25</div>
<div class="c num" style="left:170.0px;top:470.1px;width:21.2px">=</div>
<div class="bx" style="left:222px;top:466px;width:23px;height:20px;line-height:22px">14</div>
<div class="c num" style="left:244.6px;top:470.1px;width:23.8px">29</div>
<div class="c num" style="left:268.4px;top:470.1px;width:21.6px">+</div>
<div class="c num" style="left:290.0px;top:470.1px;width:22.3px">27</div>
<div class="c num" style="left:312.3px;top:470.1px;width:22.0px">=</div>
<div class="bx" style="left:365px;top:466px;width:23px;height:20px;line-height:22px">15</div>
<div class="c num" style="left:387.7px;top:470.1px;width:23.5px">12</div>
<div class="c num" style="left:411.2px;top:470.1px;width:21.2px">+</div>
<div class="c num" style="left:432.4px;top:470.1px;width:23.5px">25</div>
<div class="c num" style="left:455.9px;top:470.1px;width:21.2px">=</div>
<div class="bx" style="left:508px;top:466px;width:23px;height:20px;line-height:22px">16</div>
<div class="c num" style="left:530.3px;top:470.1px;width:23.5px">28</div>
<div class="c num" style="left:553.8px;top:470.1px;width:21.7px">+</div>
<div class="c num" style="left:575.5px;top:470.1px;width:23.0px">25</div>
<div class="c num" style="left:598.5px;top:470.1px;width:21.8px">=</div>
<div class="bx" style="left:79px;top:527px;width:23px;height:20px;line-height:22px">17</div>
<div class="c num" style="left:101.5px;top:531.1px;width:24.3px">32</div>
<div class="c num" style="left:125.8px;top:531.1px;width:21.4px">−</div>
<div class="c num" style="left:147.2px;top:531.1px;width:22.8px">28</div>
<div class="c num" style="left:170.0px;top:531.1px;width:21.2px">=</div>
<div class="bx" style="left:222px;top:527px;width:23px;height:20px;line-height:22px">18</div>
<div class="c num" style="left:244.6px;top:531.1px;width:23.8px">48</div>
<div class="c num" style="left:268.4px;top:531.1px;width:21.6px">−</div>
<div class="c num" style="left:290.0px;top:531.1px;width:22.3px">46</div>
<div class="c num" style="left:312.3px;top:531.1px;width:22.0px">=</div>
<div class="bx" style="left:365px;top:527px;width:23px;height:20px;line-height:22px">19</div>
<div class="c num" style="left:387.7px;top:531.1px;width:23.5px">15</div>
<div class="c num" style="left:411.2px;top:531.1px;width:21.2px">+</div>
<div class="c num" style="left:432.4px;top:531.1px;width:23.5px">25</div>
<div class="c num" style="left:455.9px;top:531.1px;width:21.2px">=</div>
<div class="bx" style="left:508px;top:527px;width:23px;height:20px;line-height:22px">20</div>
<div class="c num" style="left:530.3px;top:531.1px;width:23.5px">29</div>
<div class="c num" style="left:553.8px;top:531.1px;width:21.7px">−</div>
<div class="c num" style="left:575.5px;top:531.1px;width:23.0px">14</div>
<div class="c num" style="left:598.5px;top:531.1px;width:21.8px">=</div>
<div class="bx" style="left:79px;top:588px;width:23px;height:20px;line-height:22px">21</div>
<div class="c num" style="left:101.5px;top:592.1px;width:24.3px">27</div>
<div class="c num" style="left:125.8px;top:592.1px;width:21.4px">+</div>
<div class="c num" style="left:147.2px;top:592.1px;width:22.8px">15</div>
<div class="c num" style="left:170.0px;top:592.1px;width:21.2px">=</div>
<div class="bx" style="left:222px;top:588px;width:23px;height:20px;line-height:22px">22</div>
<div class="c num" style="left:244.6px;top:592.1px;width:23.8px">23</div>
<div class="c num" style="left:268.4px;top:592.1px;width:21.6px">+</div>
<div class="c num" style="left:290.0px;top:592.1px;width:22.3px">17</div>
<div class="c num" style="left:312.3px;top:592.1px;width:22.0px">=</div>
<div class="bx" style="left:365px;top:588px;width:23px;height:20px;line-height:22px">23</div>
<div class="c num" style="left:387.7px;top:592.1px;width:23.5px">18</div>
<div class="c num" style="left:411.2px;top:592.1px;width:21.2px">−</div>
<div class="c num" style="left:432.4px;top:592.1px;width:23.5px">18</div>
<div class="c num" style="left:455.9px;top:592.1px;width:21.2px">=</div>
<div class="bx" style="left:508px;top:588px;width:23px;height:20px;line-height:22px">24</div>
<div class="c num" style="left:530.3px;top:592.1px;width:23.5px">22</div>
<div class="c num" style="left:553.8px;top:592.1px;width:21.7px">−</div>
<div class="c num" style="left:575.5px;top:592.1px;width:23.0px">17</div>
<div class="c num" style="left:598.5px;top:592.1px;width:21.8px">=</div>
<div class="bx" style="left:79px;top:649px;width:23px;height:20px;line-height:22px">25</div>
<div class="c num" style="left:101.5px;top:653.1px;width:24.3px">11</div>
<div class="c num" style="left:125.8px;top:653.1px;width:21.4px">+</div>
<div class="c num" style="left:147.2px;top:653.1px;width:22.8px">26</div>
<div class="c num" style="left:170.0px;top:653.1px;width:21.2px">=</div>
<div class="bx" style="left:222px;top:649px;width:23px;height:20px;line-height:22px">26</div>
<div class="c num" style="left:244.6px;top:653.1px;width:23.8px">21</div>
<div class="c num" style="left:268.4px;top:653.1px;width:21.6px">+</div>
<div class="c num" style="left:290.0px;top:653.1px;width:22.3px">13</div>
<div class="c num" style="left:312.3px;top:653.1px;width:22.0px">=</div>
<div class="bx" style="left:365px;top:649px;width:23px;height:20px;line-height:22px">27</div>
<div class="c num" style="left:387.7px;top:653.1px;width:23.5px">26</div>
<div class="c num" style="left:411.2px;top:653.1px;width:21.2px">−</div>
<div class="c num" style="left:432.4px;top:653.1px;width:23.5px">17</div>
<div class="c num" style="left:455.9px;top:653.1px;width:21.2px">=</div>
<div class="bx" style="left:508px;top:649px;width:23px;height:20px;line-height:22px">28</div>
<div class="c num" style="left:530.3px;top:653.1px;width:23.5px">32</div>
<div class="c num" style="left:553.8px;top:653.1px;width:21.7px">−</div>
<div class="c num" style="left:575.5px;top:653.1px;width:23.0px">24</div>
<div class="c num" style="left:598.5px;top:653.1px;width:21.8px">=</div>
<div class="bx" style="left:79px;top:710px;width:23px;height:20px;line-height:22px">29</div>
<div class="c num" style="left:101.5px;top:714.1px;width:24.3px">23</div>
<div class="c num" style="left:125.8px;top:714.1px;width:21.4px">+</div>
<div class="c num" style="left:147.2px;top:714.1px;width:22.8px">14</div>
<div class="c num" style="left:170.0px;top:714.1px;width:21.2px">=</div>
<div class="bx" style="left:222px;top:710px;width:23px;height:20px;line-height:22px">30</div>
<div class="c num" style="left:244.6px;top:714.1px;width:23.8px">28</div>
<div class="c num" style="left:268.4px;top:714.1px;width:21.6px">−</div>
<div class="c num" style="left:290.0px;top:714.1px;width:22.3px">21</div>
<div class="c num" style="left:312.3px;top:714.1px;width:22.0px">=</div>
<div class="bx" style="left:365px;top:710px;width:23px;height:20px;line-height:22px">31</div>
<div class="c num" style="left:387.7px;top:714.1px;width:23.5px">25</div>
<div class="c num" style="left:411.2px;top:714.1px;width:21.2px">−</div>
<div class="c num" style="left:432.4px;top:714.1px;width:23.5px">12</div>
<div class="c num" style="left:455.9px;top:714.1px;width:21.2px">=</div>
<div class="bx" style="left:508px;top:710px;width:23px;height:20px;line-height:22px">32</div>
<div class="c num" style="left:530.3px;top:714.1px;width:23.5px">48</div>
<div class="c num" style="left:553.8px;top:714.1px;width:21.7px">−</div>
<div class="c num" style="left:575.5px;top:714.1px;width:23.0px">19</div>
<div class="c num" style="left:598.5px;top:714.1px;width:21.8px">=</div>
<div class="bx" style="left:79px;top:771px;width:23px;height:20px;line-height:22px">33</div>
<div class="c num" style="left:101.5px;top:775.1px;width:24.3px">18</div>
<div class="c num" style="left:125.8px;top:775.1px;width:21.4px">+</div>
<div class="c num" style="left:147.2px;top:775.1px;width:22.8px">29</div>
<div class="c num" style="left:170.0px;top:775.1px;width:21.2px">=</div>
<div class="bx" style="left:222px;top:771px;width:23px;height:20px;line-height:22px">34</div>
<div class="c num" style="left:244.6px;top:775.1px;width:23.8px">45</div>
<div class="c num" style="left:268.4px;top:775.1px;width:21.6px">−</div>
<div class="c num" style="left:290.0px;top:775.1px;width:22.3px">26</div>
<div class="c num" style="left:312.3px;top:775.1px;width:22.0px">=</div>
<div class="bx" style="left:365px;top:771px;width:23px;height:20px;line-height:22px">35</div>
<div class="c num" style="left:387.7px;top:775.1px;width:23.5px">12</div>
<div class="c num" style="left:411.2px;top:775.1px;width:21.2px">−</div>
<div class="c num" style="left:432.4px;top:775.1px;width:23.5px">11</div>
<div class="c num" style="left:455.9px;top:775.1px;width:21.2px">=</div>
<div class="bx" style="left:508px;top:771px;width:23px;height:20px;line-height:22px">36</div>
<div class="c num" style="left:530.3px;top:775.1px;width:23.5px">25</div>
<div class="c num" style="left:553.8px;top:775.1px;width:21.7px">−</div>
<div class="c num" style="left:575.5px;top:775.1px;width:23.0px">22</div>
<div class="c num" style="left:598.5px;top:775.1px;width:21.8px">=</div>
<div class="bx" style="left:79px;top:832px;width:23px;height:20px;line-height:22px">37</div>
<div class="c num" style="left:101.5px;top:836.1px;width:24.3px">24</div>
<div class="c num" style="left:125.8px;top:836.1px;width:21.4px">+</div>
<div class="c num" style="left:147.2px;top:836.1px;width:22.8px">13</div>
<div class="c num" style="left:170.0px;top:836.1px;width:21.2px">=</div>
<div class="bx" style="left:222px;top:832px;width:23px;height:20px;line-height:22px">38</div>
<div class="c num" style="left:244.6px;top:836.1px;width:23.8px">11</div>
<div class="c num" style="left:268.4px;top:836.1px;width:21.6px">+</div>
<div class="c num" style="left:290.0px;top:836.1px;width:22.3px">26</div>
<div class="c num" style="left:312.3px;top:836.1px;width:22.0px">=</div>
<div class="bx" style="left:365px;top:832px;width:23px;height:20px;line-height:22px">39</div>
<div class="c num" style="left:387.7px;top:836.1px;width:23.5px">19</div>
<div class="c num" style="left:411.2px;top:836.1px;width:21.2px">+</div>
<div class="c num" style="left:432.4px;top:836.1px;width:23.5px">21</div>
<div class="c num" style="left:455.9px;top:836.1px;width:21.2px">=</div>
<div class="bx" style="left:508px;top:832px;width:23px;height:20px;line-height:22px">40</div>
<div class="c num" style="left:530.3px;top:836.1px;width:23.5px">40</div>
<div class="c num" style="left:553.8px;top:836.1px;width:21.7px">−</div>
<div class="c num" style="left:575.5px;top:836.1px;width:23.0px">38</div>
<div class="c num" style="left:598.5px;top:836.1px;width:21.8px">=</div>
<div class="bx" style="left:79px;top:893px;width:23px;height:20px;line-height:22px">41</div>
<div class="c num" style="left:101.5px;top:897.1px;width:24.3px">21</div>
<div class="c num" style="left:125.8px;top:897.1px;width:21.4px">+</div>
<div class="c num" style="left:147.2px;top:897.1px;width:22.8px">19</div>
<div class="c num" style="left:170.0px;top:897.1px;width:21.2px">=</div>
<div class="bx" style="left:222px;top:893px;width:23px;height:20px;line-height:22px">42</div>
<div class="c num" style="left:244.6px;top:897.1px;width:23.8px">22</div>
<div class="c num" style="left:268.4px;top:897.1px;width:21.6px">−</div>
<div class="c num" style="left:290.0px;top:897.1px;width:22.3px">17</div>
<div class="c num" style="left:312.3px;top:897.1px;width:22.0px">=</div>
<div class="bx" style="left:365px;top:893px;width:23px;height:20px;line-height:22px">43</div>
<div class="c num" style="left:387.7px;top:897.1px;width:23.5px">22</div>
<div class="c num" style="left:411.2px;top:897.1px;width:21.2px">+</div>
<div class="c num" style="left:432.4px;top:897.1px;width:23.5px">19</div>
<div class="c num" style="left:455.9px;top:897.1px;width:21.2px">=</div>
<div class="bx" style="left:508px;top:893px;width:23px;height:20px;line-height:22px">44</div>
<div class="c num" style="left:530.3px;top:897.1px;width:23.5px">38</div>
<div class="c num" style="left:553.8px;top:897.1px;width:21.7px">−</div>
<div class="c num" style="left:575.5px;top:897.1px;width:23.0px">19</div>
<div class="c num" style="left:598.5px;top:897.1px;width:21.8px">=</div>
<div class="a" style="left:45px;top:353px;width:1px;height:66px;background:#c79aa6"></div>
<div class="a" style="left:45px;top:529px;width:1px;height:64px;background:#c79aa6"></div>
<div class="a" style="left:45px;top:704px;width:1px;height:95px;background:#c79aa6"></div>
<div class="a" style="left:45px;top:910px;width:1px;height:35px;background:#c79aa6"></div>
<div class="c" style="left:9px;top:437.0px;width:60px;height:16px;font-size:14px;line-height:16px;color:#222;transform:rotate(-90deg);letter-spacing:1px">学号:</div>
<div class="c" style="left:9px;top:612.0px;width:60px;height:16px;font-size:14px;line-height:16px;color:#222;transform:rotate(-90deg);letter-spacing:1px">姓名:</div>
<div class="c" style="left:9px;top:818.0px;width:60px;height:16px;font-size:14px;line-height:16px;color:#222;transform:rotate(-90deg);letter-spacing:1px">班级:</div>
<div class="c ser" style="left:780px;top:214px;width:122px;font-size:20.5px;font-weight:bold;color:#0000ff;letter-spacing:0.3px">参数设定</div>
<div class="lab" style="left:700px;top:284px;width:61px;height:18px;line-height:19px">最小值</div>
<div class="val" style="left:762px;top:284px;width:61px;height:19px;line-height:20px">5</div>
<div class="a" style="left:792px;top:302px;width:1px;height:1px;background:#fff"></div>
<div class="lab" style="left:855px;top:284px;width:59px;height:18px;line-height:19px">最大值</div>
<div class="val" style="left:915px;top:284px;width:67px;height:19px;line-height:20px">40</div>
<div class="a" style="left:951px;top:302px;width:1px;height:1px;background:#fff"></div>
<div class="lab" style="left:700px;top:346px;width:92px;height:17px;line-height:19px">运算模式</div>
<div class="val" style="left:793px;top:346px;width:121px;height:18px;line-height:20px">任意模式</div>
<div class="lab" style="left:700px;top:406px;width:92px;height:18px;line-height:19px">第二算数</div>
<div class="val" style="left:793px;top:406px;width:92px;height:19px;line-height:20px">十位数</div>
<div class="lab" style="left:700px;top:468px;width:92px;height:17px;line-height:19px">运算方式</div>
<div class="val" style="left:793px;top:468px;width:92px;height:18px;line-height:20px">加减法混合</div>
<div class="a" style="left:823px;top:485px;width:1px;height:1px;background:#fff"></div>
<div class="a" style="left:854px;top:485px;width:1px;height:1px;background:#fff"></div>
<div class="lab" style="left:700px;top:528px;width:92px;height:18px;line-height:19px">打印答案</div>
<div class="val" style="left:793px;top:528px;width:61px;height:19px;line-height:20px">否</div>
<div class="a" style="left:823px;top:546px;width:1px;height:1px;background:#fff"></div>
<div class="lab" style="left:700px;top:590px;width:92px;height:17px;line-height:19px">允许零值</div>
<div class="val" style="left:793px;top:590px;width:61px;height:18px;line-height:20px">否</div>
<div class="a" style="left:823px;top:607px;width:1px;height:1px;background:#fff"></div>
<div class="lab" style="left:700px;top:650px;width:92px;height:18px;line-height:19px">题目数量</div>
<div class="val" style="left:793px;top:650px;width:61px;height:19px;line-height:20px">60</div>
<div class="a" style="left:823px;top:668px;width:1px;height:1px;background:#fff"></div>
<div class="t" style="left:795.5px;top:366.5px;font-size:13.8px;color:#a3cf8e">需要与<b style="color:#3f5f22">第二算数</b>配合</div>
<div class="t" style="left:795.5px;top:427.5px;font-size:13.8px;color:#a3cf8e">会影响<b style="color:#3f5f22">运算模式</b>出题的正确率</div>
<div class="a ser" style="left:879px;top:529px;width:59px;height:17px;border:1px solid #c4c4c4;border-radius:4px;background:#fdfdfd;color:#0000ff;font-size:15px;font-weight:500;text-align:center;text-indent:2px;line-height:16px;white-space:nowrap">确定</div>
<div class="a ser" style="left:880px;top:652px;width:59px;height:17px;border:1px solid #c4c4c4;border-radius:4px;background:#fdfdfd;color:#0000ff;font-size:15px;font-weight:500;text-align:center;text-indent:2px;line-height:16px;white-space:nowrap">确定</div>
<div class="a ser" style="left:701px;top:732px;width:153px;height:48px;border:1px solid #c4c4c4;border-radius:4px;background:#fdfdfd;color:#ff0000;font-size:20px;font-weight:600;text-align:center;text-indent:2px;line-height:54px;white-space:nowrap">刷新</div>
<div class="a ser" style="left:700px;top:844px;width:153px;height:47px;border:1px solid #c4c4c4;border-radius:4px;background:#fdfdfd;color:#ff0000;font-size:20px;font-weight:600;text-align:center;text-indent:2px;line-height:51px;white-space:nowrap">打印多份</div>
<div class="t" style="left:1077px;top:207.5px;font-size:15.9px;color:#7030a0;font-weight:300;font-weight:400">本表可实现加减法的进位、退位控制。</div>
<div class="t" style="left:1073px;top:245px;font-size:13.6px;color:#00b050;font-weight:300;">要启用按键功能，需要在按下列步骤启用宏：</div>
<div class="t" style="left:1048px;top:263px;font-size:13.6px;color:#00b050;font-weight:300;">1、打开“文件”菜单，选“选项”</div>
<div class="t" style="left:1048px;top:281px;font-size:13.6px;color:#00b050;font-weight:300;">2、选“信任中心”，再点“信任中心设置”按键</div>
<div class="t" style="left:1048px;top:298px;font-size:13.6px;color:#00b050;font-weight:300;">3、选“宏设置”，再选“启用所有宏”</div>
<div class="t" style="left:1048px;top:316.5px;font-size:13.6px;color:#00b050;font-weight:300;">4、确定后再保存文档重新打开即可。</div>
<div class="t" style="left:1048px;top:350px;font-size:13.55px;color:#0000ff;font-weight:300;">因各电脑配置的打印机不同，可能存在效果差异，打印前请先</div>
<div class="t" style="left:1048px;top:369.5px;font-size:13.55px;color:#0000ff;font-weight:300;"><span style="color:#ff0000">预览</span>（<span style="display:inline-block;width:3px"></span>快捷键： <span style="color:#ff0000;font-size:12px">Ctrl + P</span>）<span style="display:inline-block;width:2.4px"></span>，发现为2页纸时需要手动调整排版。</div>
<div class="t" style="left:1048px;top:403px;font-size:13.55px;color:#c55a11;font-weight:300;">注意：表本全采用公式计算，难以规避所有情况，可能会出现</div>
<div class="t" style="left:1048px;top:420.5px;font-size:13.55px;color:#c55a11;font-weight:300;">异常情况，若标题提示存在异常，请用“刷新”按键重新生成题</div>
<div class="t" style="left:1048px;top:438px;font-size:13.55px;color:#c55a11;font-weight:300;">目（也可以双击其右侧单元格，再点击其他单元格）<span style="color:#ff0000">。</span></div>
<div class="t" style="left:1048px;top:473.5px;font-size:15.8px;color:#0000ff;font-weight:300;">【<span style="color:#ff0000">打印</span>】可指定<span style="color:#ff0000">份数</span>，每份题目均<span style="color:#ff0000">不相同</span>。</div>
<div class="t" style="left:1048px;top:514px;font-size:15.8px;color:#00b050;font-weight:300;">因某些特殊原因，可能会出现错误，<span style="color:#ff0000">刷新</span>即可！</div>
<div class="t" style="left:1048px;top:535.5px;font-size:15.8px;color:#00b050;font-weight:300;"><span style="color:#ff0000">打印多份</span>时会跳过错误，即刷新到无错误才打印！</div>
</div></div>
<div class="a" style="left:1548px;top:184px;width:17px;height:758px;background:#f4f5f8"></div>
<div class="a" style="left:1551px;top:200px;width:14px;height:742px;background:#eaecf1"></div>
<div class="a" style="left:1552px;top:221px;width:12px;height:237px;border-radius:6px;background:#d2d5dd"></div>
<svg class="a" style="left:1548px;top:184px" width="17" height="758"><path d="M5 7.500h10M5 9.500h10" stroke="#9aa0ad" stroke-width="1"/><path d="M7 27l3-3.500l3 3.500z M7 747l3 3.500l3-3.500z" fill="#9aa0ad"/></svg>
<div class="a" style="left:0;top:942px;width:1565px;height:50px;background:#f4f5f8"></div>
<div class="a" style="left:0;top:942px;width:1565px;height:1px;background:#dfe1e7"></div>
<div class="a" style="left:0;top:964px;width:1565px;height:1px;background:#dfe1e7"></div>
<div class="tab" style="left:120px;width:67px;background:#ffc000;color:#75622a;">加减法</div>
<div class="tab" style="left:188px;width:67px;background:#7030a0;color:#fff;">乘除法</div>
<div class="tab" style="left:256px;width:91px;background:#fff;color:#1fb56f;font-weight:500">进阶加减法</div>
<div class="tab" style="left:348px;width:91px;background:#0000ff;color:#fff;text-decoration:underline;text-underline-offset:1px;text-decoration-thickness:1px">竖式运算题</div>
<div class="tab" style="left:440px;width:79px;background:#00b0f0;color:#36607a;">复合运算</div>
<div class="tab" style="left:520px;width:67px;background:#ffc000;color:#75622a;">比大小</div>
<div class="tab" style="left:588px;width:127px;background:#ffc000;color:#75622a;">加减法（填空题）</div>
<div class="tab" style="left:716px;width:127px;background:#7030a0;color:#fff;">乘除法（填空题）</div>
<div class="a" style="left:261px;top:961px;width:82px;height:2px;background:#ff0000"></div>
<div class="t" style="left:858.5px;top:946.5px;font-size:12px;color:#3a4358;letter-spacing:1px;font-weight:bold">···</div>
<div class="a" style="left:925px;top:946px;width:607px;height:14px;background:#e9ebf0"></div>
<div class="a" style="left:945px;top:947px;width:436px;height:12px;border-radius:6px;background:#d3d6de"></div>
<div class="t" style="left:57px;top:972.5px;font-size:12px;color:#333;letter-spacing:0.42px">平均值=14.346&nbsp; 计数=910&nbsp; 求和=7173</div>
<div class="a" style="left:1196px;top:966px;width:23px;height:24px;background:#dfe1e7"></div>
<div class="t" style="left:1293px;top:972px;font-size:12px;color:#333">85%</div>
<svg class="a" style="left:0;top:760px" width="1565" height="232" viewBox="0 760 1565 232" fill="none" stroke-linecap="round" stroke-linejoin="round">
<defs><filter id="sh" x="-20%" y="-20%" width="140%" height="140%"><feGaussianBlur stdDeviation="1.500"/></filter></defs>
<g stroke="#b0b4bd" stroke-width="1.2"><path d="M16.500 948v11M24.500 948l-5.500 5.500l5.500 5.500M49.500 948l-5.500 5.500l5.500 5.500"/></g>
<g stroke="#3a4358" stroke-width="1.2"><path d="M69 948l5.500 5.500l-5.500 5.500M94 948l5.500 5.500l-5.500 5.500M101.500 948v11"/></g>
<g stroke="#3a4358" stroke-width="1.2"><path d="M884 953.500h13M890.500 947v13"/></g>
<g stroke="#9aa0ad" stroke-width="1"><path d="M916.500 948v11M918.500 948v11M1539.500 948v11M1541.500 948v11"/></g>
<path d="M936.500 950.500v6l-3.500-3z M1522 950.500v6l3.500-3z" fill="#9aa0ad" stroke="none"/>
<g fill="#444" stroke="#444" transform="translate(2.500,2.500)" opacity="0.4" filter="url(#sh)"><path d="M111 935.900H859" stroke-width="3.800" stroke-dasharray="4.800 4.170" fill="none" stroke-linecap="butt"/><path d="M116.900 969.900H859" stroke-width="3.800" stroke-dasharray="4.200 4.950" fill="none" stroke-linecap="butt"/><rect x="111" y="934" width="4.2" height="3.8" stroke="none"/><rect x="855.2" y="934" width="3.8" height="3.8" stroke="none"/><rect x="111" y="968" width="4.2" height="3.8" stroke="none"/><rect x="855.2" y="968" width="3.8" height="3.8" stroke="none"/><rect x="111" y="940.8" width="4.1" height="3.9" stroke="none"/><rect x="111" y="950" width="4.1" height="3.9" stroke="none"/><rect x="111" y="959.2" width="4.1" height="3.7" stroke="none"/><rect x="855.2" y="943.2" width="3.8" height="4" stroke="none"/><rect x="855.2" y="951.8" width="3.8" height="4" stroke="none"/><rect x="855.2" y="960.7" width="3.8" height="4" stroke="none"/></g>
<g fill="#ff0000" stroke="#ff0000" ><path d="M111 935.900H859" stroke-width="3.800" stroke-dasharray="4.800 4.170" fill="none" stroke-linecap="butt"/><path d="M116.900 969.900H859" stroke-width="3.800" stroke-dasharray="4.200 4.950" fill="none" stroke-linecap="butt"/><rect x="111" y="934" width="4.2" height="3.8" stroke="none"/><rect x="855.2" y="934" width="3.8" height="3.8" stroke="none"/><rect x="111" y="968" width="4.2" height="3.8" stroke="none"/><rect x="855.2" y="968" width="3.8" height="3.8" stroke="none"/><rect x="111" y="940.8" width="4.1" height="3.9" stroke="none"/><rect x="111" y="950" width="4.1" height="3.9" stroke="none"/><rect x="111" y="959.2" width="4.1" height="3.7" stroke="none"/><rect x="855.2" y="943.2" width="3.8" height="4" stroke="none"/><rect x="855.2" y="951.8" width="3.8" height="4" stroke="none"/><rect x="855.2" y="960.7" width="3.8" height="4" stroke="none"/></g>
<g transform="translate(2.500,2.500)" opacity="0.5" filter="url(#sh)"><path d="M944.500 779.500L876 913" stroke="#333" stroke-width="3" stroke-linecap="round"/><path d="M865.600 929.200L869.200 905.900L876 913L883.200 913.200z" fill="#333" stroke="#333" stroke-width="0.5"/></g>
<path d="M944.500 779.500L876 913" stroke="#ff0000" stroke-width="3" stroke-linecap="round"/><path d="M865.600 929.200L869.200 905.900L876 913L883.200 913.200z" fill="#ff0000" stroke="#ff0000" stroke-width="0.5"/>
<g stroke="#2b3548" stroke-width="1.1"><circle cx="20.200" cy="974.200" r="3.400"/><circle cx="20.200" cy="974.200" r="1.300"/><path d="M25 972.700h4.500v10.300c0 1.500-1 2.500-2.400 2.500h-8.200c-1 0-1.600-.6-1.600-1.500s.6-1.500 1.600-1.500h8.500M19.600 978.300v4.200"/><rect x="29.500" y="972.700" width="2" height="3.700" rx="1"/></g>
<g stroke="#3a4358" stroke-width="1.1"><path d="M1123 979c2.500-4 5-5.500 8-5.500s5.500 1.500 8 5.500c-2.500 3.500-5 5-8 5s-5.500-1.500-8-5z"/><circle cx="1131" cy="979" r="2.600"/><path d="M1131 970v2M1125.500 971.500l1 1.700M1136.500 971.500l-1 1.700"/></g>
<g stroke="#3a4358" stroke-width="1.100"><rect x="1146.500" y="974.500" width="16" height="7"/><rect x="1151.500" y="971.500" width="6" height="13"/></g>
<path d="M1166 977l2.700 3l2.700-3z M1322.500 977l2.500 3l2.500-3z" fill="#6b7385" stroke="none"/>
<g stroke="#dcdfe6" stroke-width="1"><path d="M1185.500 970v16M1282.500 970v16"/></g>
<g stroke="#3a4358" stroke-width="1.100" stroke-linecap="butt"><rect x="1200.500" y="971.500" width="14" height="12"/><path d="M1200.500 975.500h14M1200.500 979.500h14M1205.500 971.500v12M1210 971.500v12"/>
<rect x="1226.500" y="970.500" width="14" height="15"/><path d="M1229.500 972.500v11h8v-11z"/>
<rect x="1252.500" y="971.500" width="15" height="13"/><path d="M1257.500 971.500v6h7v-6"/></g>
<g stroke="#3a4358" stroke-width="1.800" stroke-linecap="butt"><path d="M1340 978h10M1512 978h10.500M1517.200 973v10"/></g>
<g stroke="#6b7385" stroke-width="1"><path d="M1362 978.500h52"/></g><g stroke="#d3d6de" stroke-width="1"><path d="M1424 978.500h75.500M1430.500 975.500v6"/></g>
<circle cx="1418.500" cy="978.500" r="5.500" fill="#fff" stroke="#3a4358" stroke-width="1.100"/>
<g stroke="#3a4358" stroke-width="1.100"><path d="M1535.500 975v-3.500h3.500M1549 975v-3.500h-3.500M1535.500 981v3.500h3.500M1549 981v3.500h-3.500M1535.800 971.800l3.500 3.500M1548.700 971.800l-3.500 3.500M1535.800 984.200l3.500-3.500M1548.700 984.200l-3.500-3.500"/></g>
</svg>
</body></html>
